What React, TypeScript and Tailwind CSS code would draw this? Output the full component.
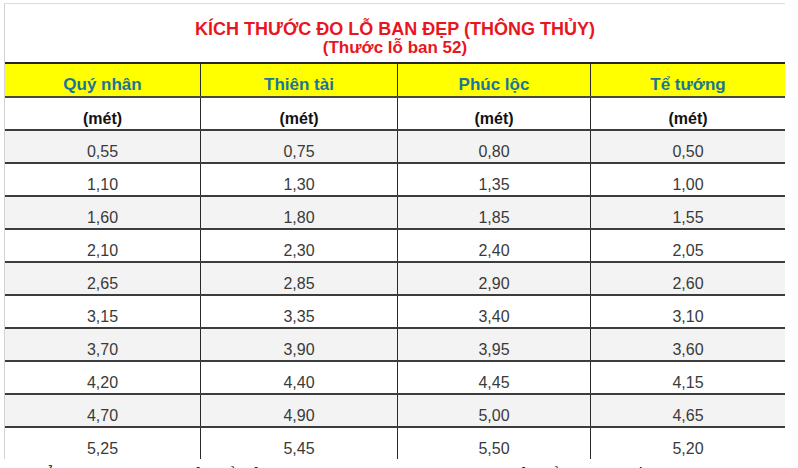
import React from 'react';

const columns = ['Quý nhân', 'Thiên tài', 'Phúc lộc', 'Tể tướng'];

const rows: string[][] = [
  ['0,55', '0,75', '0,80', '0,50'],
  ['1,10', '1,30', '1,35', '1,00'],
  ['1,60', '1,80', '1,85', '1,55'],
  ['2,10', '2,30', '2,40', '2,05'],
  ['2,65', '2,85', '2,90', '2,60'],
  ['3,15', '3,35', '3,40', '3,10'],
  ['3,70', '3,90', '3,95', '3,60'],
  ['4,20', '4,40', '4,45', '4,15'],
  ['4,70', '4,90', '5,00', '4,65'],
  ['5,25', '5,45', '5,50', '5,20'],
];

const gridCols = 'grid grid-cols-[196px_197px_193px_194px]';

export default function App() {
  return (
    <div
      className="w-[798px] h-[468px] overflow-hidden bg-white pt-[3px] pl-[4px]"
      style={{ fontFamily: '"Liberation Sans", Arial, sans-serif' }}
    >
      <div className="w-[781px] border-l border-[#d3d3d3]">
        {/* Tiêu đề */}
        <div className="h-[59px] border-t border-[#dcdcdc] pt-[15px] flex flex-col items-center text-[#e8161e] font-bold">
          <div className="text-[18px] leading-[20px]">KÍCH THƯỚC ĐO LỖ BAN ĐẸP (THÔNG THỦY)</div>
          <div className="text-[17px] leading-[18px]">(Thước lỗ ban 52)</div>
        </div>

        {/* Hàng tiêu đề cột */}
        <div className={`${gridCols} border-t-2 border-b-2 border-t-[#262626] border-b-[#4a4a3a] bg-[#ffff00]`}>
          {columns.map((c, i) => (
            <div
              key={c}
              className={`h-[32px] flex items-end justify-center pb-[2px] text-[17px] leading-[18px] font-bold text-[#1a759a] ${
                i < 3 ? 'border-r border-[#2a2a2a]' : ''
              }`}
            >
              {c}
            </div>
          ))}
        </div>

        {/* Đơn vị */}
        <div className={`${gridCols} border-b-2 border-[#3c3c3c] bg-white`}>
          {columns.map((c, i) => (
            <div
              key={c}
              className={`h-[31px] flex items-end justify-center pb-[1px] text-[16px] leading-[18px] font-bold text-[#111] ${
                i < 3 ? 'border-r border-[#2a2a2a]' : ''
              }`}
            >
              (mét)
            </div>
          ))}
        </div>

        {/* Dữ liệu */}
        {rows.map((r, ri) => (
          <div
            key={ri}
            className={`${gridCols} ${ri < rows.length - 1 ? 'border-b-2 border-[#3c3c3c]' : ''} ${
              ri % 2 === 0 ? 'bg-[#f3f3f3]' : 'bg-white'
            }`}
          >
            {r.map((v, ci) => (
              <div
                key={ci}
                className={`h-[31px] flex items-end justify-center pb-[1px] text-[16px] leading-[18px] text-[#3a3a3a] ${
                  ci < 3 ? 'border-r border-[#2a2a2a]' : ''
                }`}
              >
                {v}
              </div>
            ))}
          </div>
        ))}
      </div>

      <p className="mt-[6px] pl-[40px] text-[16px] leading-[20px] text-[#222] whitespace-nowrap">
        Ở bảng trên, khi đo cửa sổ, cửa chính thì chọn kích thước thông thủy để đạt cung tốt.
      </p>
    </div>
  );
}
